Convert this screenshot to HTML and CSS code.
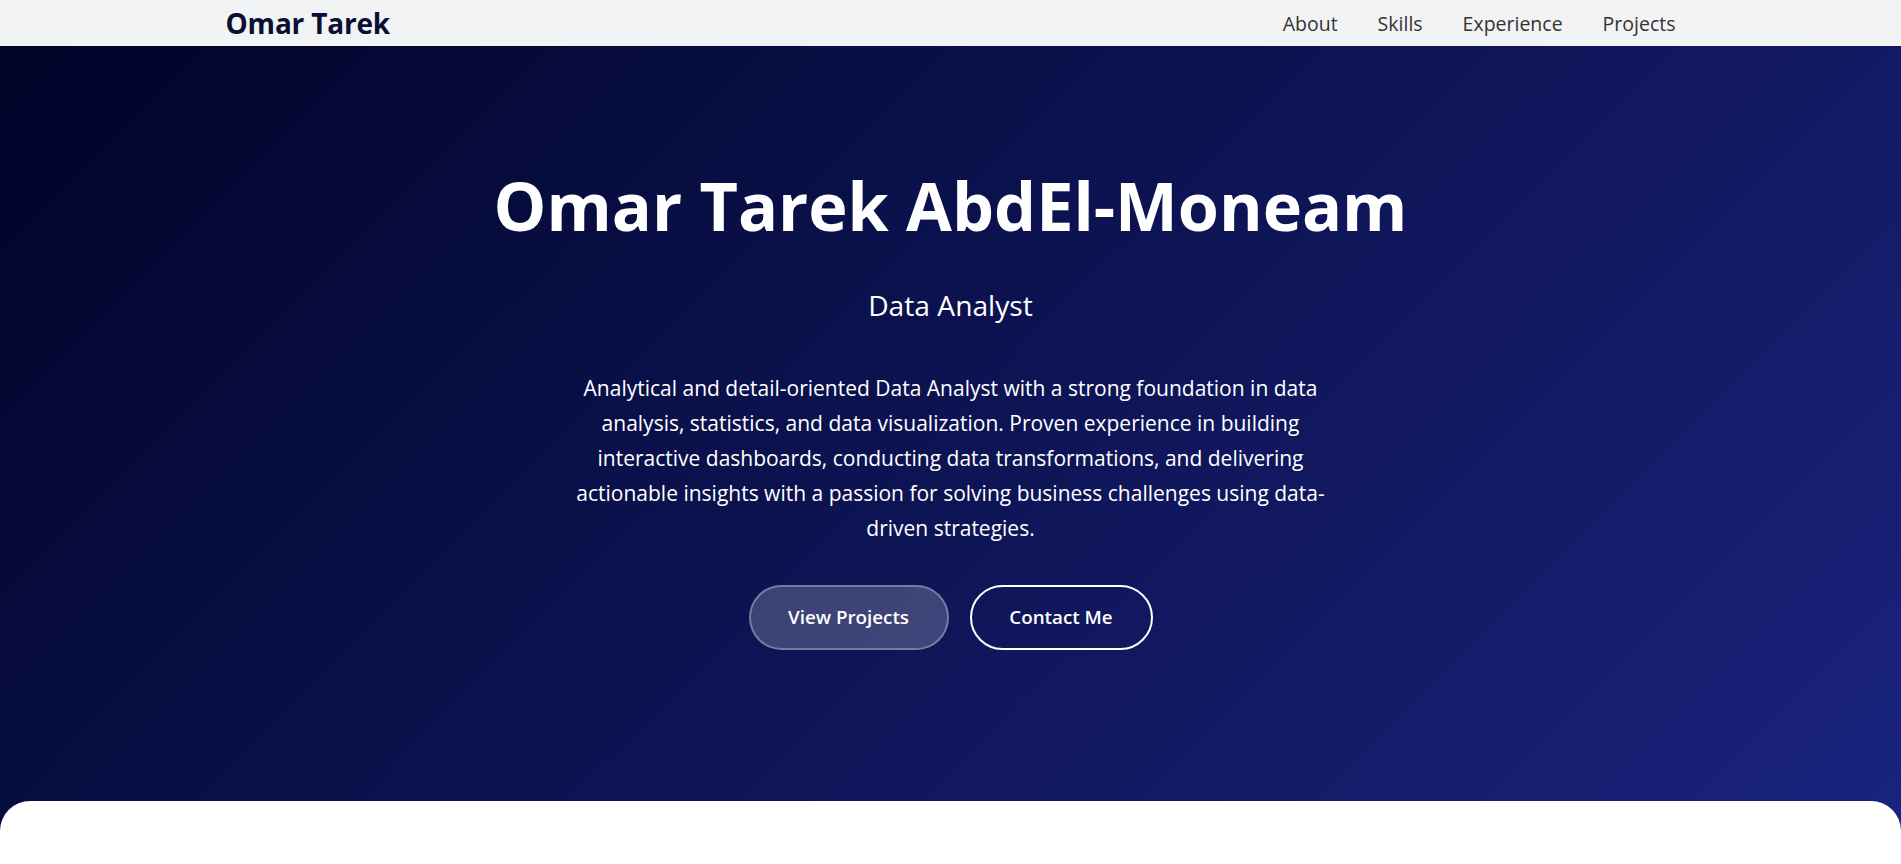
FILE: index.html
```html
<!DOCTYPE html>
<html lang="en">
<head>
    <meta charset="UTF-8">
    <meta name="viewport" content="width=device-width, initial-scale=1.0">
    <title>Omar Tarek | Data Analyst</title>
    <link rel="stylesheet" href="styles.css">
</head>
<body>
    <header class="navbar">
        <div class="nav-inner">
            <a href="#home" class="logo">Omar Tarek</a>
            <ul class="nav-links">
                <li><a href="#about">About</a></li>
                <li><a href="#skills">Skills</a></li>
                <li><a href="#experience">Experience</a></li>
                <li><a href="#projects">Projects</a></li>
            </ul>
        </div>
    </header>

    <section id="home" class="hero">
        <h1>Omar Tarek AbdEl-Moneam</h1>
        <h2>Data Analyst</h2>
        <p>Analytical and detail-oriented Data Analyst with a strong foundation in data analysis, statistics, and data visualization. Proven experience in building interactive dashboards, conducting data transformations, and delivering actionable insights with a passion for solving business challenges using data-driven strategies.</p>
        <div class="hero-btns">
            <a href="#projects" class="btn btn-fill">View Projects</a>
            <a href="#contact" class="btn btn-outline">Contact Me</a>
        </div>
    </section>

    <section id="about" class="content"></section>
</body>
</html>
```
FILE: styles.css
```css
*{
    box-sizing: border-box;
}
body{
    margin: 0;
    padding: 0;
    font-family: "Open Sans", "Noto Sans", sans-serif;
    background-color: #fff;
}
a{
    text-decoration: none;
}
ul,li{
    list-style: none;
    padding: 0;
    margin: 0;
}

/* top bar */
.navbar{
    background-color: #f2f3f5;
    height: 46px;
}
.nav-inner{
    max-width: 1450px;
    height: 100%;
    margin: 0 auto;
    display: flex;
    align-items: center;
    justify-content: space-between;
}
.logo{
    font-size: 28px;
    font-weight: 700;
    color: #0b1033;
    letter-spacing: -0.2px;
}
.nav-links{
    display: flex;
    gap: 40px;
}
.nav-links a{
    font-size: 19.5px;
    color: #333;
}

/* hero */
.hero{
    background: linear-gradient(135deg, #000428 0%, #1a237e 100%);
    color: #fff;
    text-align: center;
    padding: 120px 20px 181px;
}
.hero h1{
    font-size: 66.5px;
    font-weight: 700;
    line-height: 1.2;
    margin: 0;
}
.hero h2{
    font-size: 28.2px;
    font-weight: 400;
    line-height: 1.4;
    margin: 40px 0 0;
}
.hero p{
    max-width: 760px;
    margin: 46px auto 0;
    font-size: 21px;
    line-height: 35px;
}
.hero-btns{
    display: flex;
    justify-content: center;
    gap: 21px;
    margin-top: 39px;
}
.btn{
    display: inline-block;
    height: 65px;
    line-height: 61px;
    padding: 0 20px;
    border-radius: 40px;
    font-size: 18.8px;
    font-weight: 600;
    color: #fff;
}
.btn-fill{
    width: 200px;
    background-color: rgba(255,255,255,0.2);
    border: 2px solid rgba(255,255,255,0.3);
}
.btn-outline{
    width: 183px;
    border: 2px solid #fff;
}

/* next section slides over the hero */
.content{
    position: relative;
    margin-top: -30px;
    min-height: 400px;
    background-color: #fff;
    border-radius: 30px 30px 0 0;
}
```
